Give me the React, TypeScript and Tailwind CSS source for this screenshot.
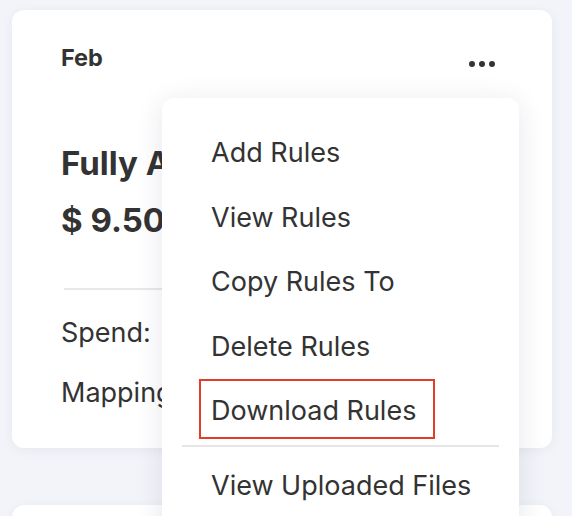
import * as React from "react";

const MENU_ITEMS = ["Add Rules", "View Rules", "Copy Rules To", "Delete Rules", "Download Rules"];

export default function App() {
  return (
    <div
      className="relative w-[572px] h-[516px] overflow-hidden bg-[#f3f4f9] text-[#333333]"
      style={{ fontFamily: "Inter, 'Noto Sans', sans-serif" }}
    >
      <div className="flex flex-col gap-[57px] pt-[10px] pl-[12px]">
        {/* Card */}
        <div className="w-[540px] h-[438px] rounded-[12px] bg-white shadow-[0_2px_12px_rgba(40,50,90,0.06)] px-[49px] pt-[34px]">
          <div className="flex items-center justify-between h-[28px]">
            <span className="text-[23.5px] font-bold">Feb</span>
            <div className="flex gap-[4px] mr-[8px] mt-[12px]">
              <span className="w-[6px] h-[6px] rounded-full bg-[#333333]" />
              <span className="w-[6px] h-[6px] rounded-full bg-[#333333]" />
              <span className="w-[6px] h-[6px] rounded-full bg-[#333333]" />
            </div>
          </div>
          <div className="mt-[71px] text-[33px] font-bold leading-[40px]">Fully Allocated</div>
          <div className="mt-[17px] text-[33px] font-bold leading-[40px]">$ 9.50</div>
          <div className="mt-[48px] ml-[3px] h-[2px] bg-[#e8e8ea]" />
          <div className="mt-[26px] text-[27px] leading-[34px]">Spend:</div>
          <div className="mt-[26px] text-[27px] leading-[34px]">Mapping</div>
        </div>
        {/* Next card */}
        <div className="w-[540px] h-[300px] rounded-[12px] bg-white shadow-[0_2px_12px_rgba(40,50,90,0.06)]" />
      </div>

      {/* Dropdown menu */}
      <div className="absolute left-[162px] top-[98px] w-[357px] h-[460px] rounded-[12px] bg-white shadow-[0_4px_28px_rgba(30,40,80,0.11)] px-[20px] pt-[23px]">
        {MENU_ITEMS.map((item, i) => (
          <div key={i} className="relative flex items-center h-[64.5px] pl-[29px] text-[27px]">
            {item}
            {item === "Download Rules" && (
              <div className="absolute left-[17px] top-[0px] w-[236px] h-[60px] border-2 border-[#e23d28]" />
            )}
          </div>
        ))}
        <div className="h-[2px] bg-[#e6e6e8] mt-[1px]" />
        <div className="flex items-center h-[80px] pl-[29px] text-[27px]">View Uploaded Files</div>
      </div>
    </div>
  );
}
